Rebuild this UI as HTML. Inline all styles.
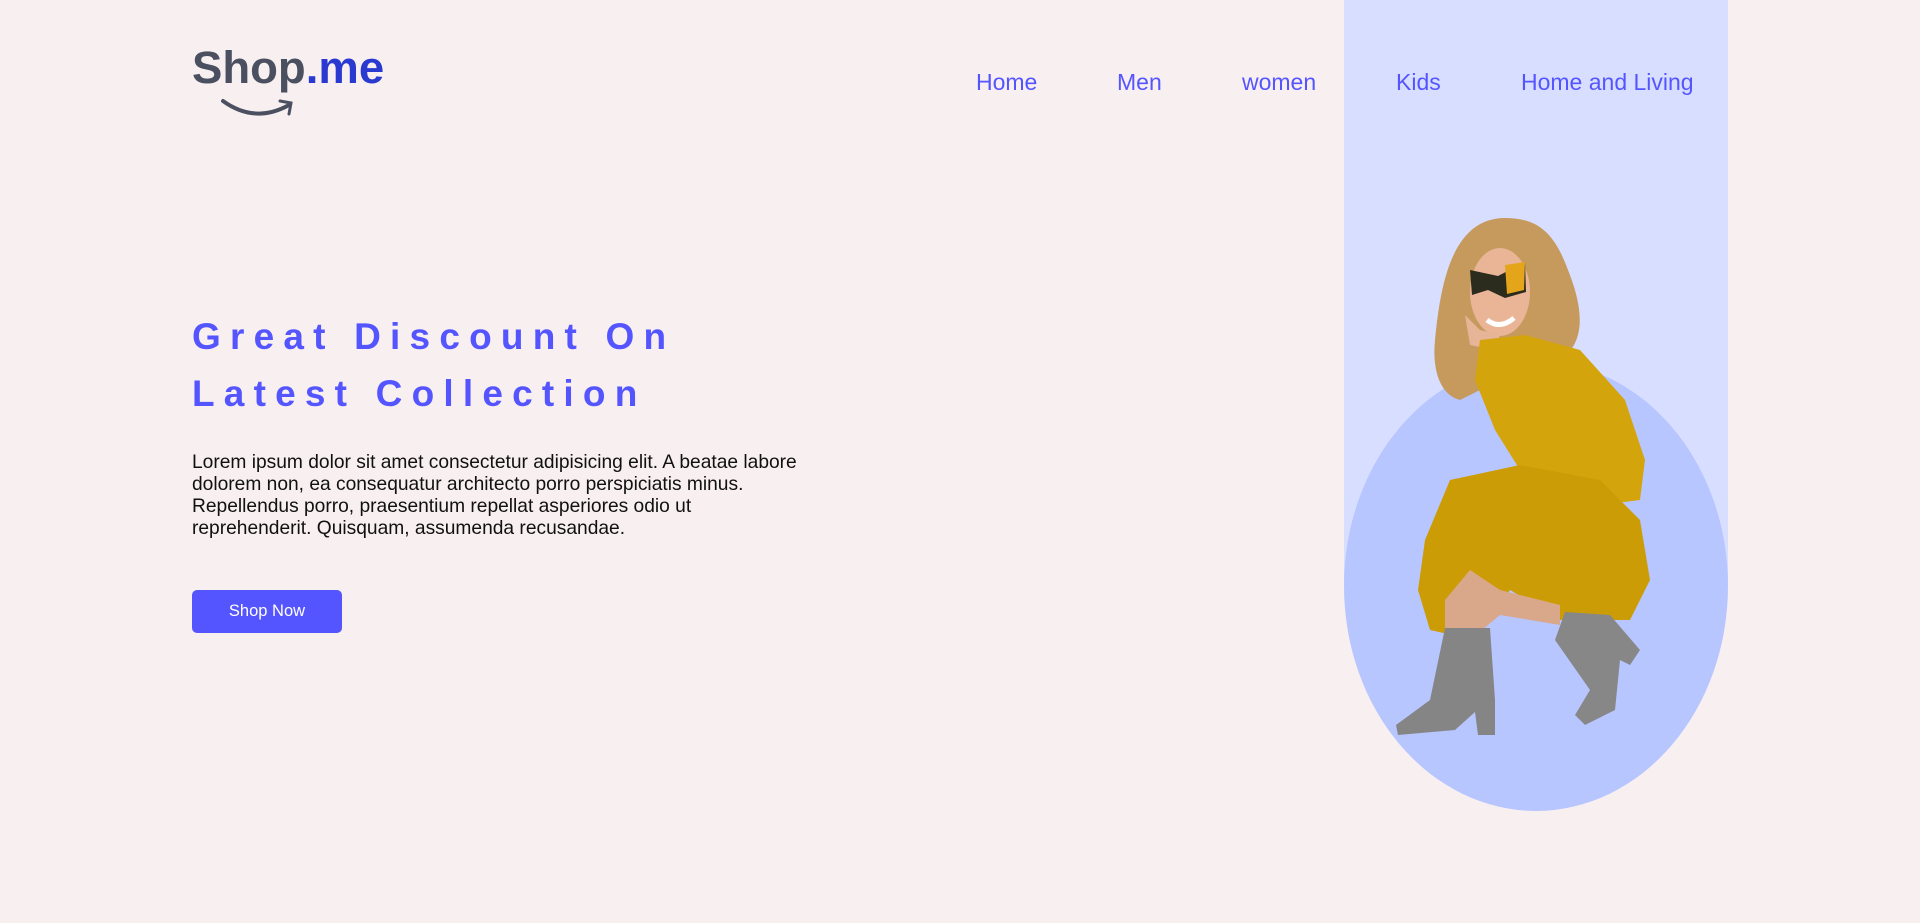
<!DOCTYPE html>
<html><head><meta charset="utf-8"><style>
*{margin:0;padding:0;box-sizing:border-box}
html,body{width:1920px;height:923px;overflow:hidden;background:#f8eff0;font-family:"Liberation Sans",Arial,sans-serif}
.abs{position:absolute}
.nav{top:68px;font-size:23px;color:#5555ff;white-space:nowrap;line-height:28px}
h1{position:absolute;left:192px;top:308px;font-size:37px;font-weight:bold;color:#5555ff;letter-spacing:9.2px;line-height:57px;white-space:nowrap}
p{position:absolute;left:192px;top:452px;font-size:19.2px;line-height:22px;color:#111;white-space:nowrap}
.btn{left:192px;top:590px;width:150px;height:43px;background:#5555ff;border-radius:5px;color:#fff;font-size:16.5px;text-align:center;line-height:43px}
</style></head><body>
<svg class="abs" style="left:0;top:0" width="1920" height="923">
<rect x="1344" y="0" width="384" height="586" fill="#d8deff"/>
<ellipse cx="1536" cy="586" rx="192" ry="225" fill="#b8c6ff"/>
<rect x="1344" y="361" width="384" height="225" fill="#b8c6ff"/>
<path d="M1344 361 L1344 586 A192 225 0 0 1 1536 361 Z" fill="#d8deff"/>
<path d="M1728 361 L1728 586 A192 225 0 0 0 1536 361 Z" fill="#d8deff"/>
<path d="M1505 218 C1450 218 1440 290 1435 340 C1432 370 1440 395 1460 400 L1500 380 L1560 360 C1590 340 1580 300 1568 270 C1555 235 1540 218 1505 218Z" fill="#c59a5c"/>
<ellipse cx="1500" cy="292" rx="30" ry="44" fill="#e9b596"/>
<path d="M1470 270 L1498 276 L1525 262 L1526 292 L1505 298 L1488 290 L1472 295Z" fill="#2b2b1e"/>
<path d="M1505 265 L1525 262 L1524 290 L1507 294Z" fill="#e4a51a"/>
<path d="M1487 320 Q1500 330 1514 318" stroke="#fff" stroke-width="5" fill="none"/>
<path d="M1465 315 L1470 345 L1495 350 L1500 335 L1480 330Z" fill="#e6b497"/>
<path d="M1480 340 L1525 335 L1580 350 L1625 400 L1645 460 L1640 500 L1560 510 L1520 470 L1495 430 L1475 380Z" fill="#d4a40c"/>
<path d="M1450 480 L1520 465 L1600 480 L1640 520 L1650 580 L1630 620 L1560 620 L1510 590 L1475 640 L1430 630 L1418 590 L1425 540Z" fill="#cc9c06"/>
<path d="M1445 600 L1470 570 L1500 590 L1560 605 L1560 625 L1500 615 L1470 640 L1445 635Z" fill="#d9a88a"/>
<path d="M1445 628 L1490 628 L1495 700 L1495 735 L1478 735 L1475 712 L1455 730 L1398 735 L1396 725 L1430 700 Z" fill="#858585"/>
<path d="M1565 612 L1610 615 L1640 650 L1630 665 L1620 660 L1615 710 L1585 725 L1575 715 L1590 690 L1555 640Z" fill="#878787"/>
<path d="M223 101 Q255 124 289 105" stroke="#4a5060" stroke-width="4" fill="none" stroke-linecap="round"/>
<path d="M280 101 L291 103 L289 114" stroke="#4a5060" stroke-width="3" fill="none" stroke-linecap="round"/>
</svg>
<div class="abs" style="left:192px;top:42px;font-size:45.5px;font-weight:bold;line-height:52px;color:#4a5060;white-space:nowrap">Shop<span style="color:#2a3ad0">.me</span></div>
<div class="abs nav" style="left:976px">Home</div>
<div class="abs nav" style="left:1117px">Men</div>
<div class="abs nav" style="left:1242px">women</div>
<div class="abs nav" style="left:1396px">Kids</div>
<div class="abs nav" style="left:1521px">Home and Living</div>
<h1>Great Discount On<br>Latest Collection</h1>
<p>Lorem ipsum dolor sit amet consectetur adipisicing elit. A beatae labore<br>dolorem non, ea consequatur architecto porro perspiciatis minus.<br>Repellendus porro, praesentium repellat asperiores odio ut<br>reprehenderit. Quisquam, assumenda recusandae.</p>
<div class="abs btn">Shop Now</div>
</body></html>
